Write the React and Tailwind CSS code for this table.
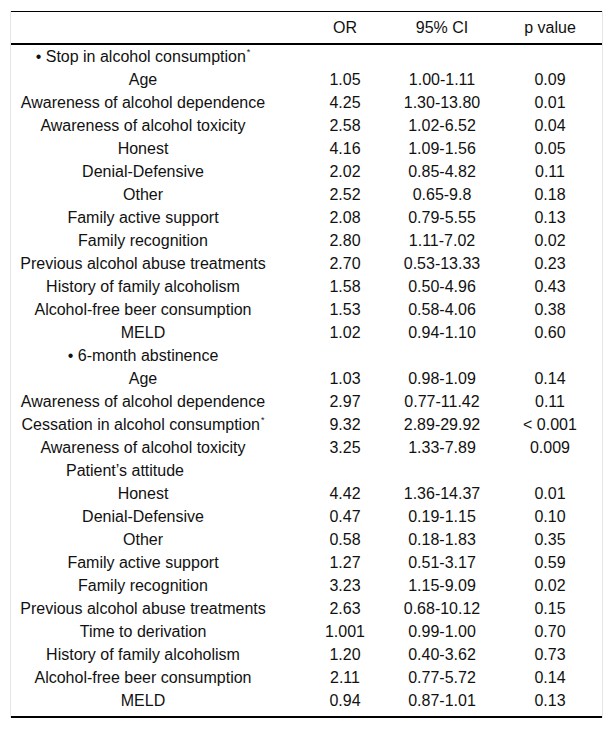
import React from 'react';

const rows = [
  { label: '• Stop in alcohol consumption', star: true, head: true },
  { label: 'Age', or: '1.05', ci: '1.00-1.11', p: '0.09' },
  { label: 'Awareness of alcohol dependence', or: '4.25', ci: '1.30-13.80', p: '0.01' },
  { label: 'Awareness of alcohol toxicity', or: '2.58', ci: '1.02-6.52', p: '0.04' },
  { label: 'Honest', or: '4.16', ci: '1.09-1.56', p: '0.05' },
  { label: 'Denial-Defensive', or: '2.02', ci: '0.85-4.82', p: '0.11' },
  { label: 'Other', or: '2.52', ci: '0.65-9.8', p: '0.18' },
  { label: 'Family active support', or: '2.08', ci: '0.79-5.55', p: '0.13' },
  { label: 'Family recognition', or: '2.80', ci: '1.11-7.02', p: '0.02' },
  { label: 'Previous alcohol abuse treatments', or: '2.70', ci: '0.53-13.33', p: '0.23' },
  { label: 'History of family alcoholism', or: '1.58', ci: '0.50-4.96', p: '0.43' },
  { label: 'Alcohol-free beer consumption', or: '1.53', ci: '0.58-4.06', p: '0.38' },
  { label: 'MELD', or: '1.02', ci: '0.94-1.10', p: '0.60' },
  { label: '• 6-month abstinence', head: true },
  { label: 'Age', or: '1.03', ci: '0.98-1.09', p: '0.14' },
  { label: 'Awareness of alcohol dependence', or: '2.97', ci: '0.77-11.42', p: '0.11' },
  { label: 'Cessation in alcohol consumption', star: true, or: '9.32', ci: '2.89-29.92', p: '< 0.001' },
  { label: 'Awareness of alcohol toxicity', or: '3.25', ci: '1.33-7.89', p: '0.009' },
  { label: 'Patient’s attitude', head: true, shift: true },
  { label: 'Honest', or: '4.42', ci: '1.36-14.37', p: '0.01' },
  { label: 'Denial-Defensive', or: '0.47', ci: '0.19-1.15', p: '0.10' },
  { label: 'Other', or: '0.58', ci: '0.18-1.83', p: '0.35' },
  { label: 'Family active support', or: '1.27', ci: '0.51-3.17', p: '0.59' },
  { label: 'Family recognition', or: '3.23', ci: '1.15-9.09', p: '0.02' },
  { label: 'Previous alcohol abuse treatments', or: '2.63', ci: '0.68-10.12', p: '0.15' },
  { label: 'Time to derivation', or: '1.001', ci: '0.99-1.00', p: '0.70' },
  { label: 'History of family alcoholism', or: '1.20', ci: '0.40-3.62', p: '0.73' },
  { label: 'Alcohol-free beer consumption', or: '2.11', ci: '0.77-5.72', p: '0.14' },
  { label: 'MELD', or: '0.94', ci: '0.87-1.01', p: '0.13' },
];

const grid = 'grid grid-cols-[284px_100px_103px_104px] text-center';

export default function App() {
  return (
    <div className="min-h-[729px] bg-white pt-[11px] pl-[10px] text-[16px] text-[#111] font-['Liberation_Sans',Arial,sans-serif]">
      <div className="w-[593px] border-x border-[#e6e6e6]">
        {/* header */}
        <div className={`${grid} h-[34px] items-center border-t border-b-2 border-t-black border-b-black`}>
          <div className="pr-[20px]"></div>
          <div>OR</div>
          <div className="pr-[9px]">95% CI</div>
          <div>p value</div>
        </div>

        <div className="pb-[4px] border-b-2 border-black">
          {rows.map((r, i) => (
            <div key={i} className={`${grid} h-[23px] items-center leading-none`}>
              <div className={r.shift ? 'pr-[56px]' : 'pr-[20px]'}>
                {r.label}
                {r.star && <span className="relative -top-[7px] ml-[1px] text-[9px]">*</span>}
              </div>
              <div>{r.or}</div>
              <div className="pr-[9px]">{r.ci}</div>
              <div>{r.p}</div>
            </div>
          ))}
        </div>
      </div>
    </div>
  );
}
